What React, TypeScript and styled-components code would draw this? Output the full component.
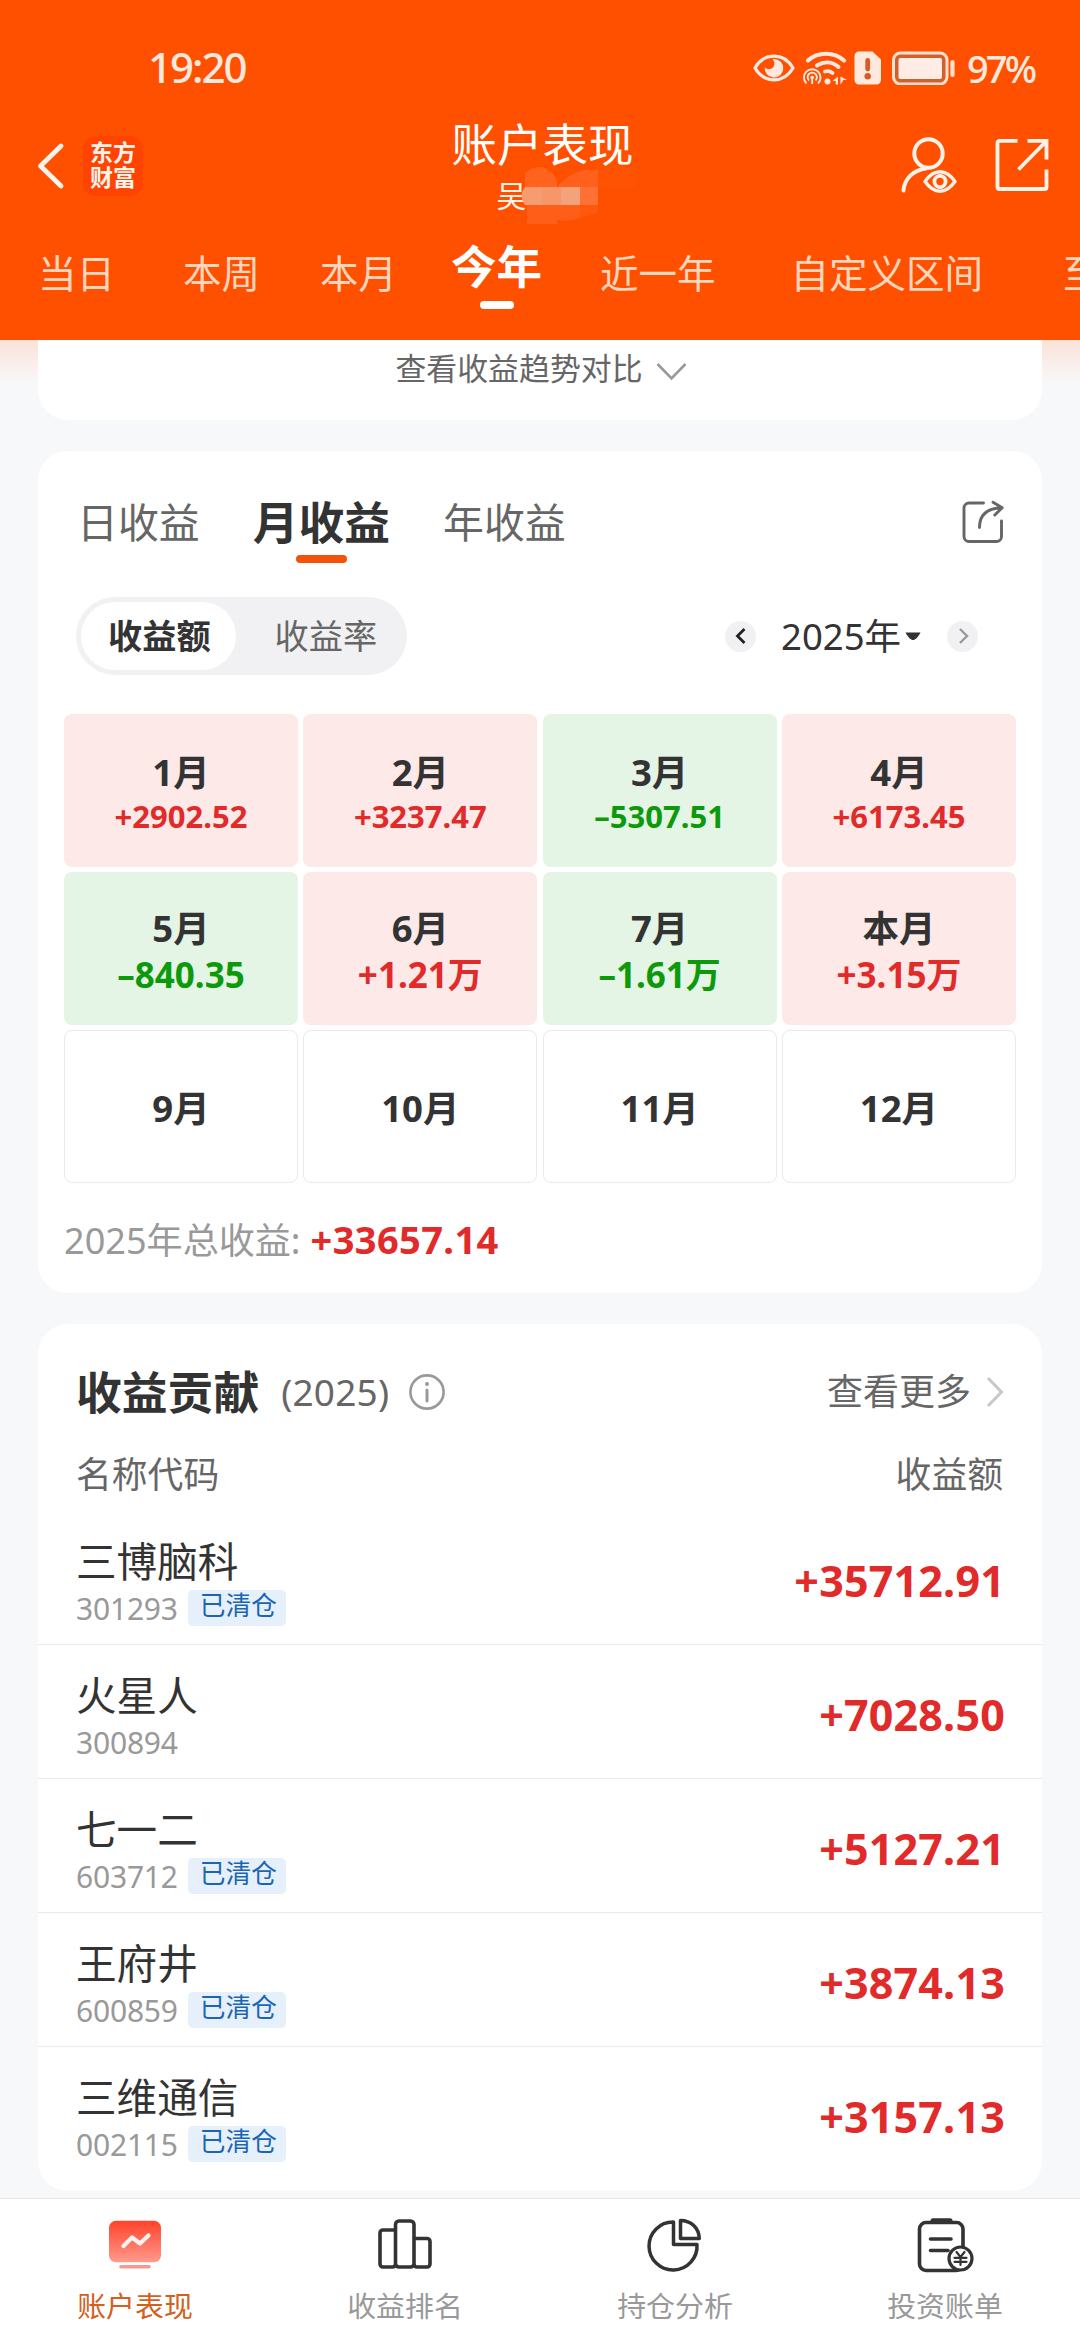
import React from "react";
import styled, { createGlobalStyle } from "styled-components";

const GlobalStyle = createGlobalStyle`
  * { box-sizing: border-box; }
  html, body { margin: 0; padding: 0; }
  body {
    width: 1080px;
    height: 2340px;
    overflow: hidden;
    background: #f7f8fa;
    font-family: "Noto Sans", "Noto Sans CJK SC", sans-serif;
  }
  svg { display: block; flex: none; }
`;

const Screen = styled.div`
  width: 1080px;
  height: 2340px;
  display: flex;
  flex-direction: column;
  overflow: hidden;
  background: #f7f8fa;
`;

/* ---------- header ---------- */

const Header = styled.header`
  height: 340px;
  flex: none;
  background: #ff5000;
  color: #fff;
  overflow: hidden;
`;

const StatusBar = styled.div`
  height: 116px;
  padding: 20px 45px 0 148px;
  display: flex;
  align-items: center;
  color: #ffe9df;
`;

const Clock = styled.span`
  flex: 1;
  padding-bottom: 2px;
  font-size: 42px;
  line-height: 48px;
  font-weight: 500;
  letter-spacing: -2px;
`;

const StatusIcons = styled.div`
  display: flex;
  align-items: center;
  gap: 7px;
`;

const Percent = styled.span`
  width: 68px;
  margin-left: 4px;
  padding-bottom: 1px;
  font-size: 38px;
  line-height: 44px;
  font-weight: 500;
  letter-spacing: -2.9px;
  white-space: nowrap;
`;

const NavBar = styled.div`
  height: 104px;
  display: grid;
  grid-template-columns: 1fr auto 1fr;
  padding: 0 31px 0 36px;
`;

const NavSide = styled.div<{ $end?: boolean }>`
  display: flex;
  align-items: center;
  justify-content: ${(p) => (p.$end ? "flex-end" : "flex-start")};
  gap: ${(p) => (p.$end ? 37 : 18)}px;
  padding-bottom: ${(p) => (p.$end ? 6 : 5)}px;
`;

const Logo = styled.div`
  width: 60px;
  height: 60px;
  padding-top: 4px;
  border-radius: 13px;
  background: #ff4300;
  text-align: center;
  font-size: 23px;
  line-height: 25px;
  font-weight: 700;
  color: #fff2ea;
`;

const TitleBlock = styled.div`
  display: flex;
  flex-direction: column;
  align-items: center;
`;

const Title = styled.h1`
  margin: 0;
  font-size: 45.5px;
  line-height: 57px;
  font-weight: 400;
`;

const Owner = styled.div`
  position: relative;
  width: 92px;
  font-size: 30px;
  line-height: 46px;
  color: #fff3ea;
`;

const Mosaic = styled.svg`
  position: absolute;
  left: 25px;
  top: -9px;
`;

const PeriodTabs = styled.nav`
  height: 120px;
  display: flex;
  padding-left: 38px;
  white-space: nowrap;
`;

const Period = styled.div<{ $before?: number; $active?: boolean }>`
  flex: none;
  display: flex;
  flex-direction: column;
  align-items: center;
  margin-left: ${(p) => p.$before ?? 0}px;
  padding-top: ${(p) => (p.$active ? 16 : 22.5)}px;
  font-size: ${(p) => (p.$active ? 45.5 : 38.5)}px;
  line-height: 60px;
  font-weight: ${(p) => (p.$active ? 700 : 400)};
  color: ${(p) => (p.$active ? "#fff" : "#ffd5be")};
`;

const Underline = styled.span<{ $width: number; $color: string; $gap: number }>`
  width: ${(p) => p.$width}px;
  height: 8px;
  margin-top: ${(p) => p.$gap}px;
  border-radius: 4px;
  background: ${(p) => p.$color};
`;

/* ---------- content ---------- */

const Content = styled.main`
  flex: 1;
  min-height: 0;
  padding: 0 38px;
  background: linear-gradient(#fbe2d9 0, #f7f8fa 44px);
  display: flex;
  flex-direction: column;
`;

const Card = styled.section`
  flex: none;
  background: #fff;
  border-radius: 30px;
  margin-bottom: 31px;
`;

const TrendCard = styled(Card)`
  height: 80px;
  border-radius: 0 0 30px 30px;
  display: flex;
  justify-content: center;
  padding: 6px 0 0 2px;
  gap: 13px;
  font-size: 30.9px;
  line-height: 44px;
  color: #666;

  svg { margin-top: 16px; }
`;

const EarningsCard = styled(Card)`
  height: 842px;
`;

const CardTabs = styled.div`
  height: 146px;
  padding: 41px 38px 0 39px;
  display: flex;
  align-items: flex-start;
  gap: 53px;
`;

const CardTab = styled.div<{ $active?: boolean }>`
  display: flex;
  flex-direction: column;
  align-items: center;
  font-size: ${(p) => (p.$active ? 45.8 : 40.9)}px;
  line-height: 60px;
  font-weight: ${(p) => (p.$active ? 700 : 400)};
  color: ${(p) => (p.$active ? "#333" : "#666")};
`;

const Push = styled.div`
  margin-left: auto;
  padding-top: 8px;
`;

const Controls = styled.div`
  display: flex;
  align-items: center;
  justify-content: space-between;
  padding: 0 64px 0 38px;
`;

const Segment = styled.div`
  width: 331px;
  height: 78px;
  padding: 5px;
  display: flex;
  border-radius: 39px;
  background: #f1f1f3;
`;

const SegmentItem = styled.div<{ $active?: boolean }>`
  width: ${(p) => (p.$active ? 155 : 166)}px;
  height: 68px;
  border-radius: 34px;
  background: ${(p) => (p.$active ? "#fff" : "transparent")};
  padding: 0 0 0 ${(p) => (p.$active ? 27 : 38.5)}px;
  font-size: 34.2px;
  line-height: 68px;
  white-space: nowrap;
  font-weight: ${(p) => (p.$active ? 700 : 400)};
  color: ${(p) => (p.$active ? "#333" : "#666")};
`;

const YearPicker = styled.div`
  display: flex;
  align-items: center;
`;

const RoundButton = styled.button`
  width: 31px;
  height: 31px;
  padding: 0;
  border: 0;
  border-radius: 50%;
  background: #f1f1f3;
  display: flex;
  align-items: center;
  justify-content: center;
`;

const YearLabel = styled.div`
  width: 191px;
  padding-left: 25px;
  display: flex;
  align-items: center;
  gap: 4px;
  font-size: 36.5px;
  line-height: 48px;
  color: #333;
  white-space: nowrap;
`;

const MonthGrid = styled.div`
  display: grid;
  grid-template-columns: repeat(4, 1fr);
  grid-auto-rows: 153px;
  gap: 5px 5.3px;
  padding: 39px 26px 0;
`;

type Tone = "up" | "down" | "none";

const toneFill: Record<Tone, string> = { up: "#fde9e8", down: "#e4f4e5", none: "#fff" };

const MonthCell = styled.div<{ $tone: Tone }>`
  border-radius: 8px;
  border: ${(p) => (p.$tone === "none" ? "1px solid #eaeaea" : "0")};
  background: ${(p) => toneFill[p.$tone]};
  padding-top: 3px;
  display: flex;
  flex-direction: column;
  align-items: center;
  justify-content: center;
`;

const MonthName = styled.div`
  font-size: 36.5px;
  line-height: 48px;
  font-weight: 700;
  color: #333;
`;

const MonthValue = styled.div<{ $tone: Tone; $large?: boolean }>`
  font-size: ${(p) => (p.$large ? 35 : 31)}px;
  line-height: ${(p) => (p.$large ? 45 : 40)}px;
  font-weight: 700;
  color: ${(p) => (p.$tone === "up" ? "#e12a2a" : "#0c9a0c")};
`;

const Total = styled.div`
  padding: 32px 26px 0;
  font-size: 36.1px;
  line-height: 48px;
  color: #999;
  white-space: nowrap;

  b {
    margin-left: 10px;
    font-size: 38px;
    letter-spacing: 0.4px;
    color: #e12a2a;
  }
`;

const ContributionCard = styled(Card)`
  height: 867px;
  margin-bottom: 0;
`;

const ContributionHead = styled.div`
  height: 112px;
  padding: 24px 38px 0 38px;
  display: flex;
  align-items: center;
  color: #666;
`;

const Heading = styled.h2`
  margin: 0;
  font-size: 45.8px;
  line-height: 60px;
  font-weight: 700;
  color: #333;
`;

const HeadYear = styled.span`
  margin: 0 19px 0 22px;
  font-size: 37px;
  line-height: 60px;
  letter-spacing: 0.2px;
`;

const More = styled.div`
  margin-left: auto;
  display: flex;
  align-items: center;
  gap: 15px;
  font-size: 36px;
  line-height: 60px;
`;

const ColumnTitles = styled.div`
  height: 75px;
  padding: 12.5px 39px 0 38px;
  display: flex;
  justify-content: space-between;
  font-size: 35.8px;
  line-height: 50px;
  color: #666;
`;

const StockRow = styled.div`
  height: 134px;
  padding: 0 37px 0 38px;
  display: flex;
  justify-content: space-between;
  border-bottom: 1px solid #e9eaec;

  &:last-child { border-bottom: 0; }
`;

const StockInfo = styled.div`
  padding-top: 25px;
`;

const StockName = styled.div`
  font-size: 40.6px;
  line-height: 52px;
  color: #333;
`;

const StockMeta = styled.div`
  display: flex;
  height: 40px;
`;

const StockCode = styled.span`
  font-size: 30px;
  line-height: 42px;
  letter-spacing: -0.2px;
  color: #999;
`;

const Badge = styled.span`
  height: 36px;
  margin: 2px 0 0 10px;
  padding: 0 9px 0 12px;
  border-radius: 5px;
  background: #e6f0fa;
  font-size: 25.7px;
  line-height: 32px;
  color: #1b66b4;
`;

const StockValue = styled.div`
  padding-top: 40px;
  font-size: 43px;
  line-height: 60px;
  font-weight: 700;
  letter-spacing: 0.2px;
  color: #e12a2a;
`;

/* ---------- bottom navigation ---------- */

const BottomBar = styled.footer`
  height: 142px;
  flex: none;
  border-top: 1px solid #e8e8e8;
  background: #fff;
  display: grid;
  grid-template-columns: repeat(4, 1fr);
`;

const BottomItem = styled.div<{ $active?: boolean }>`
  padding-top: 17px;
  display: flex;
  flex-direction: column;
  align-items: center;
  font-size: 28.9px;
  line-height: 40px;
  color: ${(p) => (p.$active ? "#d4601c" : "#999")};

  svg { margin-bottom: 12.5px; }
`;

/* ---------- icons ---------- */

const EyeStatus = () => (
  <svg width="42" height="34" viewBox="0 0 42 34" fill="none">
    <path d="M2 17C6 10 12 5.2 21 5.2S36 10 40 17C36 24 30 28.8 21 28.8S6 24 2 17Z" stroke="#ffe9df" strokeWidth="3.2" strokeLinejoin="round" />
    <path d="M21 8a9.3 9.3 0 1 1-9.2 8c1.600 2.600 5.600 3 7.800.8 2.400-2.400 2.200-6.400 0-8.600A9 9 0 0 1 21 8Z" fill="#ffe9df" />
  </svg>
);

const WifiStatus = () => (
  <svg width="45" height="34" viewBox="0 0 45 34" fill="none" stroke="#ffe9df">
    <path d="M6 9.500C16 .5 32 .5 42 9.500" strokeWidth="4.200" strokeLinecap="round" />
    <path d="M15 14.500c7-4.300 15-4 21.500 1.500" strokeWidth="4" strokeLinecap="round" />
    <path d="M23 20.500c3-.8 5.600 0 7.500 1.500" strokeWidth="3.800" strokeLinecap="round" />
    <path d="M4.500 32.500a8.300 8.300 0 1 1 11.500 0" strokeWidth="1.900" />
    <path d="M7 29.500a4.600 4.600 0 1 1 6.500 0" strokeWidth="1.800" />
    <circle cx="10.200" cy="26.500" r="1.800" fill="#ffe9df" stroke="none" />
    <path d="M10.200 27v6" strokeWidth="1.800" />
    <circle cx="25.500" cy="30.500" r="3" fill="#ffe9df" stroke="none" />
    <path d="M36 25.500V33.500h-2.300v-3.500H30.500ZM38.500 33.500v-8l6.500 3.500h-3.500Z" fill="#ffe9df" stroke="none" />
  </svg>
);

const SimStatus = () => (
  <svg width="27" height="34" viewBox="0 0 27 34">
    <path d="M5 .5h13.500L27 8.500V29a4.500 4.500 0 0 1-4.500 4.500H5A4.500 4.500 0 0 1 .5 29V5A4.500 4.500 0 0 1 5 .5Z" fill="#ffe9df" />
    <path d="M13.700 9.500v8.500" stroke="#d85a26" strokeWidth="4.800" strokeLinecap="round" />
    <circle cx="13.700" cy="25.300" r="3.200" fill="#d85a26" />
  </svg>
);

const BatteryStatus = () => (
  <svg width="68" height="34" viewBox="-4 0 68 34" fill="none">
    <rect x="1.500" y="2" width="53.500" height="31" rx="7" fill="#d0602c" stroke="#ffe0cf" strokeWidth="3" />
    <rect x="6.500" y="7" width="43.500" height="21" rx="2" fill="#ffece4" />
    <path d="M60.500 11v13" stroke="#ffe0cf" strokeWidth="4.200" strokeLinecap="round" />
  </svg>
);

const BackIcon = () => (
  <svg width="29" height="48" viewBox="0 0 29 48" fill="none">
    <path d="M25 4 4.500 24 25 44" stroke="#fff4ec" strokeWidth="4.800" strokeLinecap="round" strokeLinejoin="round" />
  </svg>
);

const PersonIcon = () => (
  <svg width="58" height="58" viewBox="0 0 58 58" fill="none" stroke="#fff2e8" strokeWidth="4" strokeLinecap="round">
    <circle cx="28.500" cy="17.500" r="14.200" />
    <path d="M26 32.500C14 34 4.500 42 3.500 54.500" />
    <path d="M25 45.500C30 38.500 35 35.800 40 35.800s10 2.700 15 9.700C50 52.500 45 55.200 40 55.200s-10-2.700-15-9.700Z" strokeWidth="3.400" strokeLinejoin="round" />
    <circle cx="40" cy="45.500" r="5.600" strokeWidth="3.800" />
  </svg>
);

const OpenIcon = () => (
  <svg width="54" height="54" viewBox="0 0 54 54" fill="none" stroke="#fff2e8" strokeWidth="3.800">
    <path d="M22.500 2.800H4.500a2 2 0 0 0-2 2V49a2 2 0 0 0 2 2H49.500a2 2 0 0 0 2-2V31.500M32.500 2.800H51.500V21.500M51 3.500 23.500 31.500" />
  </svg>
);

const ShareIcon = () => (
  <svg width="42" height="44" viewBox="0 0 42 44" fill="none" stroke="#666" strokeWidth="2.900" strokeLinecap="round" strokeLinejoin="round">
    <path d="M21.500 3H7A5 5 0 0 0 2 8V36.500a5 5 0 0 0 5 5H34.500a5 5 0 0 0 5-5V21" />
    <path d="M17.500 27.500C17.500 14.500 25 8.500 39 7.800M31 2.200 40.200 7.700 32.800 15" />
  </svg>
);

const Chevron = ({ w, h, d, color, sw }: { w: number; h: number; d: string; color: string; sw: number }) => (
  <svg width={w} height={h} viewBox={`0 0 ${w} ${h}`} fill="none">
    <path d={d} stroke={color} strokeWidth={sw} />
  </svg>
);

const InfoIcon = () => (
  <svg width="38" height="38" viewBox="0 0 38 38" fill="none">
    <circle cx="19" cy="19" r="16.600" stroke="#999" strokeWidth="2.600" />
    <circle cx="19" cy="11" r="2" fill="#999" />
    <path d="M19 17v11" stroke="#999" strokeWidth="3" strokeLinecap="round" />
  </svg>
);

const PerformanceIcon = () => (
  <svg width="56" height="57" viewBox="0 0 56 57" fill="none">
    <defs>
      <linearGradient id="perf" x1="0" y1="0" x2="0" y2="1">
        <stop offset="0" stopColor="#ff432a" />
        <stop offset="1" stopColor="#ff9a8c" />
      </linearGradient>
    </defs>
    <rect x="2" y="4.700" width="52" height="41.500" rx="7" fill="url(#perf)" />
    <path d="m16.500 30 8.500-8.500 8 6 8.500-8" stroke="#fff4f0" strokeWidth="4.200" strokeLinecap="round" strokeLinejoin="round" />
    <path d="M14 50.700H42" stroke="#f59a90" strokeWidth="3.600" strokeLinecap="round" />
  </svg>
);

const RankIcon = () => (
  <svg width="56" height="57" viewBox="0 0 56 57" fill="none" stroke="#333" strokeWidth="3.600">
    <path d="M18.500 14H6a3 3 0 0 0-3 3V48a3 3 0 0 0 3 3h9.500a3 3 0 0 0 3-3" />
    <rect x="18.500" y="5" width="18.500" height="46" rx="3.500" />
    <path d="M37 22.500H50a3 3 0 0 1 3 3V48a3 3 0 0 1-3 3H40a3 3 0 0 1-3-3" />
  </svg>
);

const PieIcon = () => (
  <svg width="56" height="57" viewBox="0 0 56 57" fill="none" stroke="#333" strokeWidth="3.500" strokeLinejoin="round">
    <path d="M26.500 6A24 24 0 1 0 50 28.500H26.500Z" />
    <path d="M33.500 4.500V22.500H52.300C52 12 44 4.500 33.500 4.500Z" />
  </svg>
);

const BillIcon = () => (
  <svg width="58" height="57" viewBox="0 0 58 57" fill="none" stroke="#333" strokeWidth="3.600" strokeLinecap="round">
    <rect x="3.500" y="6.500" width="43.500" height="48" rx="6.500" />
    <path d="M17 4.800H34" strokeWidth="5" />
    <path d="M14.500 23H35M14.500 34.500H32" />
    <circle cx="44.500" cy="42.500" r="11.500" fill="#fff" strokeWidth="3.200" />
    <path d="m40.500 36 4 5 4-5M44.500 41v8M38.500 41.800H50.500M38.500 45.800H50.500" strokeWidth="2.200" />
  </svg>
);

/* ---------- data ---------- */

const months: { name: string; value?: string; tone: Tone; large?: boolean }[] = [
  { name: "1月", value: "+2902.52", tone: "up" },
  { name: "2月", value: "+3237.47", tone: "up" },
  { name: "3月", value: "–5307.51", tone: "down" },
  { name: "4月", value: "+6173.45", tone: "up" },
  { name: "5月", value: "–840.35", tone: "down", large: true },
  { name: "6月", value: "+1.21万", tone: "up", large: true },
  { name: "7月", value: "–1.61万", tone: "down", large: true },
  { name: "本月", value: "+3.15万", tone: "up", large: true },
  { name: "9月", tone: "none" },
  { name: "10月", tone: "none" },
  { name: "11月", tone: "none" },
  { name: "12月", tone: "none" },
];

const stocks = [
  { name: "三博脑科", code: "301293", closed: true, value: "+35712.91" },
  { name: "火星人", code: "300894", closed: false, value: "+7028.50" },
  { name: "七一二", code: "603712", closed: true, value: "+5127.21" },
  { name: "王府井", code: "600859", closed: true, value: "+3874.13" },
  { name: "三维通信", code: "002115", closed: true, value: "+3157.13" },
];

export default function App() {
  return (
    <Screen>
      <GlobalStyle />
      <Header>
        <StatusBar>
          <Clock>19:20</Clock>
          <StatusIcons>
            <EyeStatus />
            <WifiStatus />
            <SimStatus />
            <BatteryStatus />
            <Percent>97%</Percent>
          </StatusIcons>
        </StatusBar>
        <NavBar>
          <NavSide>
            <BackIcon />
            <Logo>东方财富</Logo>
          </NavSide>
          <TitleBlock>
            <Title>账户表现</Title>
            <Owner>
              吴
              <Mosaic width="116" height="60" viewBox="520 164 116 60">
                <rect x="597" y="167" width="38" height="20" fill="#ff5304" />
                <path d="M524 187v-14q6-6 17-6 11 4 15 14v6Z" fill="#ff631e" />
                <path d="M556 187q12-14 27-17h14v17Z" fill="#ff601c" />
                <path d="M526 205h53v13q-12 4-23 2v4h-30Z" fill="#ff5e18" />
                <path d="M579 205h18v8l-18 5Z" fill="#ff570c" />
                <path d="M541 187h-17q-7 9 0 18h17Z" fill="#f79c70" />
                <rect x="541" y="187" width="19" height="18" fill="#f6966a" />
                <rect x="560" y="187" width="19" height="18" fill="#f3a27a" />
                <rect x="579" y="187" width="18" height="18" fill="#ff7034" />
              </Mosaic>
            </Owner>
          </TitleBlock>
          <NavSide $end>
            <PersonIcon />
            <OpenIcon />
          </NavSide>
        </NavBar>
        <PeriodTabs>
          <Period>当日</Period>
          <Period $before={68}>本周</Period>
          <Period $before={60}>本月</Period>
          <Period $before={54} $active>
            今年
            <Underline $width={34} $color="#fff" $gap={5} />
          </Period>
          <Period $before={58}>近一年</Period>
          <Period $before={75}>自定义区间</Period>
          <Period $before={80}>至今</Period>
        </PeriodTabs>
      </Header>

      <Content>
        <TrendCard>
          查看收益趋势对比
          <Chevron w={31} h={20} d="M1.500 2 15.500 16.500 29.500 2" color="#999" sw={2.6} />
        </TrendCard>

        <EarningsCard>
          <CardTabs>
            <CardTab>日收益</CardTab>
            <CardTab $active>
              月收益
              <Underline $width={51} $color="#f2520a" $gap={3} />
            </CardTab>
            <CardTab>年收益</CardTab>
            <Push>
              <ShareIcon />
            </Push>
          </CardTabs>
          <Controls>
            <Segment>
              <SegmentItem $active>收益额</SegmentItem>
              <SegmentItem>收益率</SegmentItem>
            </Segment>
            <YearPicker>
              <RoundButton>
                <Chevron w={12} h={18} d="M9.500 2 2.500 9 9.500 16" color="#222" sw={2.8} />
              </RoundButton>
              <YearLabel>
                2025年
                <svg width="16" height="11" viewBox="0 0 16 11">
                  <path d="M.5 1.500h15C13 6.500 10 9 8 9S3 6.500.5 1.500Z" fill="#333" />
                </svg>
              </YearLabel>
              <RoundButton>
                <Chevron w={12} h={18} d="M3 2 10 9 3 16" color="#999" sw={2.4} />
              </RoundButton>
            </YearPicker>
          </Controls>
          <MonthGrid>
            {months.map((m) => (
              <MonthCell key={m.name} $tone={m.tone}>
                <MonthName>{m.name}</MonthName>
                {m.value && (
                  <MonthValue $tone={m.tone} $large={m.large}>
                    {m.value}
                  </MonthValue>
                )}
              </MonthCell>
            ))}
          </MonthGrid>
          <Total>
            2025年总收益:<b>+33657.14</b>
          </Total>
        </EarningsCard>

        <ContributionCard>
          <ContributionHead>
            <Heading>收益贡献</Heading>
            <HeadYear>(2025)</HeadYear>
            <InfoIcon />
            <More>
              查看更多
              <Chevron w={18} h={32} d="M2 2 15.500 16 2 30" color="#c8c8c8" sw={3} />
            </More>
          </ContributionHead>
          <ColumnTitles>
            <span>名称代码</span>
            <span>收益额</span>
          </ColumnTitles>
          {stocks.map((s) => (
            <StockRow key={s.code}>
              <StockInfo>
                <StockName>{s.name}</StockName>
                <StockMeta>
                  <StockCode>{s.code}</StockCode>
                  {s.closed && <Badge>已清仓</Badge>}
                </StockMeta>
              </StockInfo>
              <StockValue>{s.value}</StockValue>
            </StockRow>
          ))}
        </ContributionCard>
      </Content>

      <BottomBar>
        <BottomItem $active>
          <PerformanceIcon />
          账户表现
        </BottomItem>
        <BottomItem>
          <RankIcon />
          收益排名
        </BottomItem>
        <BottomItem>
          <PieIcon />
          持仓分析
        </BottomItem>
        <BottomItem>
          <BillIcon />
          投资账单
        </BottomItem>
      </BottomBar>
    </Screen>
  );
}
